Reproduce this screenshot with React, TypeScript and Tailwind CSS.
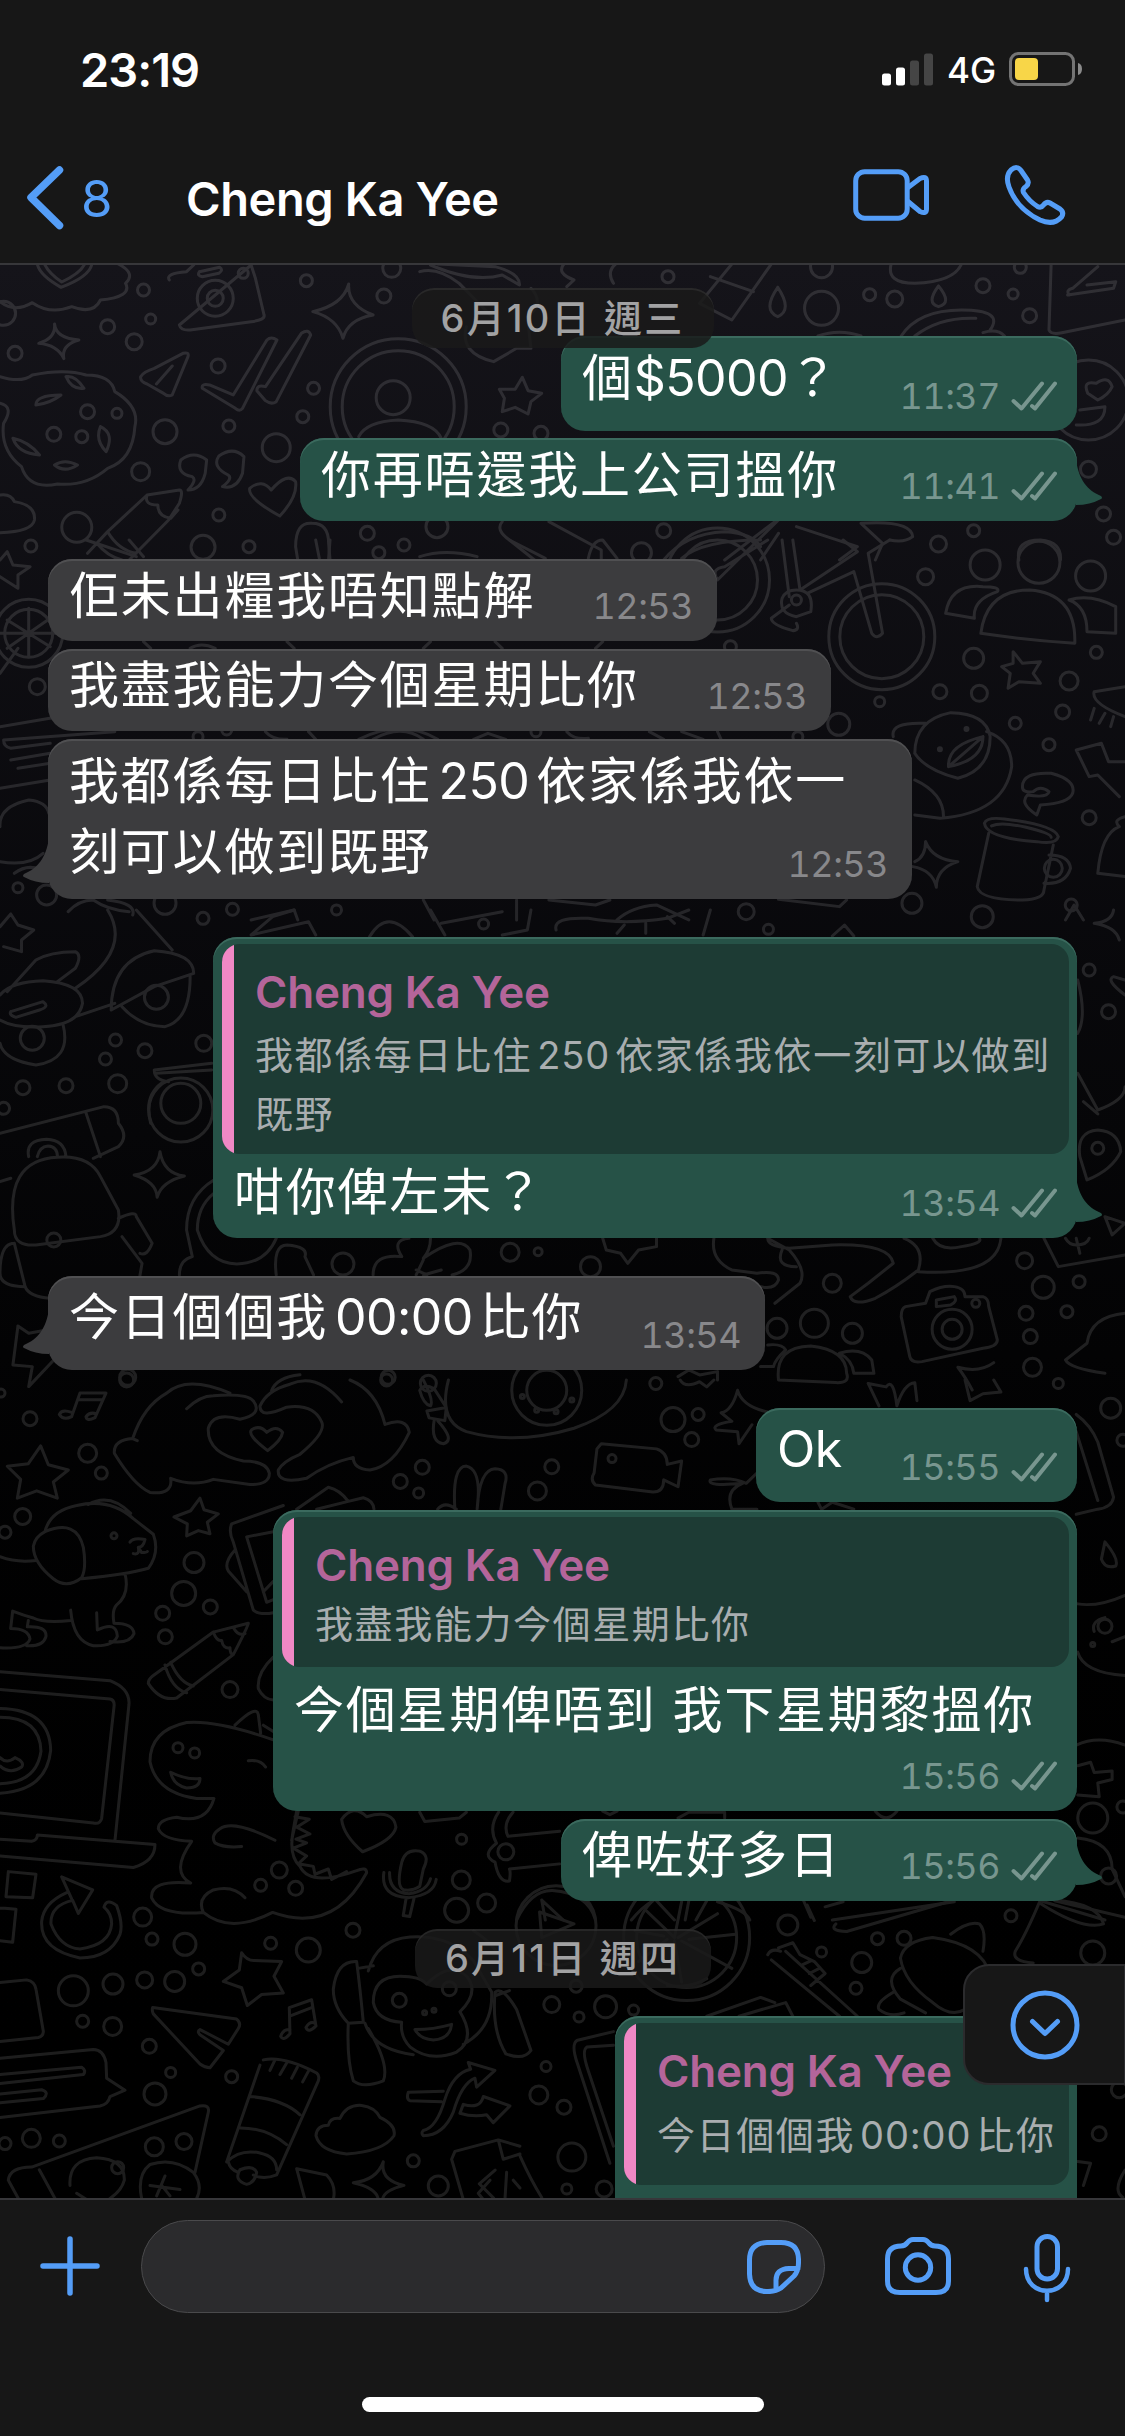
import type { ReactNode } from 'react'

type Quote = { lines: string[]; className: string; textClassName?: string }

type Message = {
  id: number
  mine: boolean
  lines: string[]
  time: string
  tail?: boolean
  quote?: Quote
  /** Size of the bubble and distance to the previous one. */
  className: string
  textClassName?: string
}

const CONTACT = 'Cheng Ka Yee'

const firstDay: Message[] = [
  { id: 1, mine: true, lines: ['個$5000？'], time: '11:37', className: '-mt-3 h-[95px] w-[516px]', textClassName: 'pt-[7px]' },
  { id: 2, mine: true, lines: ['你再唔還我上公司搵你'], time: '11:41', tail: true, className: 'mt-[7px] h-[83px] w-[777px]', textClassName: 'pt-0.5' },
  { id: 3, mine: false, lines: ['佢未出糧我唔知點解'], time: '12:53', className: 'mt-[38px] h-[82px] w-[669px]', textClassName: 'pt-0.5' },
  { id: 4, mine: false, lines: ['我盡我能力今個星期比你'], time: '12:53', className: 'mt-2 h-[82px] w-[783px]', textClassName: 'pt-px' },
  {
    id: 5,
    mine: false,
    lines: ['我都係每日比住250依家係我依一', '刻可以做到既野'],
    time: '12:53',
    tail: true,
    className: 'mt-2 h-[160px] w-[864px]',
    textClassName: 'pt-[7px]',
  },
  {
    id: 6,
    mine: true,
    lines: ['咁你俾左未？'],
    time: '13:54',
    tail: true,
    quote: { lines: ['我都係每日比住250依家係我依一刻可以做到', '既野'], className: 'h-[210px]', textClassName: 'mt-1.5' },
    className: 'mt-[38px] h-[301px] w-[864px]',
    textClassName: 'pt-[3px]',
  },
  {
    id: 7,
    mine: false,
    lines: ['今日個個我00:00比你'],
    time: '13:54',
    tail: true,
    className: 'mt-[38px] h-[94px] w-[717px]',
    textClassName: 'pt-1.5',
  },
  { id: 8, mine: true, lines: ['Ok'], time: '15:55', className: 'mt-[38px] h-[94px] w-[321px]', textClassName: 'pt-1.5' },
  {
    id: 9,
    mine: true,
    lines: ['今個星期俾唔到 我下星期黎搵你'],
    time: '15:56',
    quote: { lines: ['我盡我能力今個星期比你'], className: 'h-[150px]', textClassName: 'mt-0.5' },
    className: 'mt-2 h-[301px] w-[804px]',
    textClassName: 'pt-2',
  },
  { id: 10, mine: true, lines: ['俾咗好多日'], time: '15:56', tail: true, className: 'mt-2 h-[82px] w-[516px]', textClassName: 'pt-px' },
]

const secondDay: Message[] = [
  {
    id: 11,
    mine: true,
    lines: [],
    time: '',
    quote: { lines: ['今日個個我00:00比你'], className: 'h-[162px]', textClassName: 'mt-[7px]' },
    className: 'mt-7 h-[240px] w-[462px]',
  },
]

/** One strip of the wallpaper: its own origin and scale, line drawings and loose rings. */
type Strip = { y: number; sx: number; sy: number; paths: string[]; rings: [number, number, number][] }

const strips: Strip[] = [
  {
    y: 260,
    sx: 0.7175,
    sy: 0.3333,
    paths: [
      'M0 125 Q20 160 45 128 Q70 165 100 140 Q130 165 140 120 Q185 110 175 70 Q190 40 165 12',
      'M52 12 Q55 45 85 82 Q125 50 128 12 M62 12 Q68 40 86 66 Q112 40 118 12',
      'M236 60 Q230 40 260 35 L270 15 M350 15 L356 55 L368 165 Q370 180 350 185 L265 210 Q252 212 250 195 Z M278 35 L306 22 Q312 30 305 40 L282 50 Q274 48 278 35',
      'M486 72 Q484 135 520 165 Q485 178 478 235 Q470 175 436 155 Q478 135 486 72Z',
      'M76 192 Q78 235 110 240 Q85 255 89 296 Q80 255 54 250 Q78 235 76 192Z',
      'M282 385 Q280 370 292 375 L325 405 L372 240 Q378 228 386 240 L338 445 Q334 456 328 445Z M358 392 Q358 372 370 380 L420 220 Q430 205 433 225 L385 425 Q378 435 370 422Z',
      'M196 350 Q200 335 215 325 L255 280 Q264 275 262 290 L240 405 Q234 412 228 400 L205 372 Q195 365 196 350Z M240 318 L218 372',
      'M500 530 Q510 485 555 480 Q605 485 615 535',
      'M728 352 L736 392 L755 400 L740 425 L736 462 L718 442 L700 455 L703 415 L696 388 L718 388Z',
      'M0 350 Q30 370 45 345 Q90 325 120 345 Q155 345 160 395 Q195 440 188 500 Q185 600 150 625 Q120 680 80 672 Q40 690 30 620 Q0 570 5 490 Q20 440 0 430',
      'M50 435 Q50 405 85 405 Q70 430 50 435 M92 350 Q105 345 117 385 Q100 390 92 350 M18 535 Q40 545 55 585 Q25 580 18 535 M76 615 Q90 595 108 615 Q90 640 76 615 M140 500 Q160 520 148 575 Q132 540 140 500',
      'M286 640 Q280 690 262 690 Q275 660 268 650 Q245 640 252 600 Q270 570 288 600Z M338 640 Q330 690 310 680 Q325 655 318 645 Q295 620 305 588 Q325 558 340 590Z',
      'M390 768 Q345 715 348 685 Q365 655 378 690 Q400 635 412 665 Q415 710 390 768Z',
      'M122 880 L150 815 L205 705 L250 690 Q256 690 250 730 L235 780 L180 900 M150 815 Q165 870 190 880 M135 850 Q150 890 170 900 M205 705 Q200 735 220 735 Q220 770 238 775 L248 750',
      'M0 705 Q15 700 20 725 Q50 735 48 780 Q45 815 0 818',
      'M412 860 Q412 785 435 790 Q458 790 458 850 L460 900 M412 860 L415 900',
      'M585 35 Q610 20 640 70 L690 180 M600 15 Q660 70 700 45 L724 75 Q725 40 690 20 L610 12 M740 85 Q760 130 735 170 L740 265 L720 265 L688 305 Q640 280 650 200',
      'M786 12 Q775 40 800 60 L790 80 M858 12 Q845 35 855 70',
      'M1020 12 L975 130 L1020 180 L1075 12 M990 50 L1050 95',
      'M1084 82 Q1105 150 1084 170 Q1062 150 1084 82 M1308 78 Q1328 130 1308 140 Q1290 130 1308 78',
      'M1242 12 Q1235 70 1275 70 Q1330 65 1340 12',
      'M1256 228 Q1280 150 1340 150 Q1400 150 1380 210 M1275 228 Q1310 170 1360 175 M1140 228 Q1170 205 1200 228 M1400 228 Q1390 205 1370 218',
      'M1465 12 L1462 210 Q1465 225 1480 218 L1568 180 M1490 105 Q1485 90 1495 85 L1530 20 M1488 105 L1552 85 L1555 65 L1515 75',
      'M1516 400 Q1508 360 1528 370 Q1545 345 1550 380 Q1545 405 1530 420Z M1505 450 L1540 440 Q1540 500 1500 495',
      'M700 785 Q690 810 710 840 L745 900 M765 785 L838 870 L838 900 M925 900 Q955 820 1010 815 Q1050 820 1060 860 M1080 785 L1010 900 M1085 820 L1060 900 M1110 800 L1195 860 L1170 900 M1200 790 L1230 850 L1220 900 M1200 790 Q1270 780 1272 830 Q1260 850 1240 840',
      'M1420 900 Q1415 840 1450 840 Q1480 845 1478 900',
    ],
    rings: [
      [300, 115, 18], [300, 115, 8], [339, 40, 5], [200, 90, 6], [210, 177, 5], [150, 200, 7], [187, 245, 8], [21, 280, 7], [5, 160, 12],
      [427, 62, 6], [546, 25, 9], [535, 108, 7], [304, 318, 7], [437, 385, 6], [422, 470, 6], [319, 498, 6], [230, 515, 12], [385, 563, 14],
      [196, 635, 9], [555, 440, 68], [555, 440, 56], [548, 413, 17], [698, 510, 7], [754, 520, 7], [305, 765, 6], [107, 802, 15],
      [283, 862, 12], [347, 860, 6], [512, 820, 7], [43, 858, 6], [609, 800, 11], [563, 855, 6], [528, 878, 6], [925, 812, 7],
      [894, 878, 10], [75, 523, 7], [122, 455, 7], [931, 50, 6], [1145, 145, 17], [1145, 20, 11], [1212, 104, 6], [1247, 117, 8],
      [1370, 77, 7], [1412, 102, 5], [1435, 167, 7], [1422, 22, 6], [1517, 420, 40], [1517, 628, 8], [1538, 762, 7], [1308, 852, 8],
      [1357, 812, 6], [1552, 832, 7], [163, 460, 5], [114, 530, 6],
    ],
  },
  {
    y: 540,
    sx: 0.7175,
    sy: 0.3333,
    paths: [
      'M0 60 L10 35 L18 75 L42 80 L25 105 L25 145 L0 110',
      'M40 205 L40 350 M10 240 L70 320 M70 235 L10 325 M0 280 L78 280',
      'M0 400 L25 325 M0 560 L110 520 M5 600 L160 575 M15 625 L70 610 M15 660 L70 640 M25 685 L70 670 M0 745 L70 720 M5 600 Q5 620 15 625',
      'M0 860 Q-2 800 40 780 Q65 785 68 820 M0 965 Q40 980 60 940 M20 1000 Q45 960 70 1010',
      'M120 0 L190 50 M180 0 L200 50 M440 0 L445 55 M460 0 L458 55 M710 0 L760 55 M585 50 Q620 25 665 50 M820 55 Q825 0 840 0 L860 55',
      'M950 55 Q980 0 1060 0 M1000 120 L1085 -60 M1000 120 Q990 85 1010 80 L1070 0 M1090 0 L1100 170 M1105 0 L1115 150 L1195 35 L1175 0 M1125 160 L1190 95 L1215 280 Q1222 300 1230 280 L1210 40 L1240 0 M1090 175 Q1085 220 1110 230 L1130 215 Q1135 150 1110 150 Q1095 150 1090 175 M1100 195 L1075 235 Q1075 255 1105 272 Q1115 270 1110 250',
      'M1318 220 Q1325 130 1370 140 Q1395 140 1390 155 Q1355 180 1358 235Z M1367 280 Q1375 150 1435 150 Q1500 160 1498 310 Q1430 300 1367 280Z M1490 180 Q1520 160 1555 200 L1555 280 L1515 275 Q1515 200 1490 180Z',
      'M1412 335 L1425 370 L1450 365 L1440 400 L1450 430 L1420 425 L1405 445 L1408 400 L1396 380 L1412 370Z',
      'M1568 440 L1525 455 Q1520 490 1568 530 M1525 505 L1520 540 M1540 520 L1532 550 M1552 530 L1548 560',
      'M1245 590 Q1240 545 1290 550 M1275 640 Q1290 690 1335 715 Q1380 690 1380 590 Q1375 520 1325 518 Q1275 540 1275 640 M1375 575 Q1410 600 1410 680 Q1400 820 1310 835 L1275 825 M1275 720 Q1315 760 1315 830 M1322 680 Q1320 615 1370 590 Q1370 660 1322 680 L1370 590',
      'M1500 630 L1535 610 L1545 665 L1568 665 M1500 630 L1518 710 L1530 705 L1560 770',
      'M1425 740 Q1425 695 1465 700 Q1500 720 1495 760 Q1490 790 1450 795 L1445 825 Q1420 790 1432 765 Q1460 775 1462 755 Q1450 735 1440 755 Q1425 760 1425 740Z',
      'M1372 850 Q1375 830 1400 837 Q1470 855 1475 890 Q1472 915 1445 905 Q1375 895 1372 850 M1382 858 Q1395 845 1430 862 Q1465 880 1465 892 M1378 880 L1362 1040 Q1365 1080 1425 1080 Q1455 1078 1455 1050 L1468 915 M1462 945 Q1490 945 1492 985 Q1485 1035 1455 1030',
      'M1290 905 Q1300 960 1335 965 Q1305 985 1305 1042 Q1300 990 1272 980 M1290 905 Q1290 950 1275 965',
      'M1568 830 Q1550 840 1560 860 Q1535 880 1530 1000 L1568 1010',
      'M200 305 L210 325 M265 325 Q280 305 300 325 M400 305 L410 325 M590 325 L600 305 M700 325 L690 305 M830 325 L840 305 M370 575 Q380 600 400 598 M430 575 L440 598 M500 598 Q560 535 610 598 M520 598 Q560 550 590 598 M660 598 L680 580 L705 598 M790 575 Q800 600 820 595 M905 575 L925 598 M950 575 L980 598 M1000 575 L1005 598',
      'M590 1080 L605 1140 M720 1080 L720 1140 M765 1080 L830 1095 L850 1080 M860 1140 Q880 1100 915 1095 L960 1140 M1085 1078 L1170 1100 L1180 1080 M1485 1140 L1497 1095 L1510 1140 M350 1140 L410 1110 L415 1140 M95 1115 Q110 1080 130 1080 Q150 1110 180 1115 M150 1080 Q190 1090 185 1125',
    ],
    rings: [
      [40, 280, 34], [40, 280, 24], [52, 440, 8], [1229, 290, 53], [1229, 290, 42],
      [1000, 120, 52], [1000, 120, 40], [1290, 110, 8], [1373, 75, 15], [1448, 67, 21], [1520, 108, 15], [1528, 337, 6],
      [1357, 355, 10], [1310, 455, 7], [1365, 460, 8], [1490, 423, 9], [1226, 485, 5], [1169, 553, 11], [1481, 516, 7], [1415, 550, 6],
      [1462, 614, 6], [1518, 833, 7], [1468, 985, 9], [25, 1043, 5], [65, 1065, 10], [230, 1090, 11], [324, 1108, 6], [469, 1110, 5],
      [1040, 1115, 8], [1271, 1090, 10], [1369, 1130, 11], [1493, 1095, 6], [1347, 567, 1.5], [1310, 628, 1.5], [1110, 180, 5], [1018, 320, 6],
      [276, 590, 5], [316, 570, 5], [747, 575, 5], [1112, 590, 5],
    ],
  },
  {
    y: 910,
    sx: 0.7175,
    sy: 0.3333,
    paths: [
      'M15 12 L25 45 L47 60 L30 90 L30 125 L5 110 M15 12 L0 50',
      'M0 255 Q15 215 60 212 Q115 220 115 280 Q110 345 60 350 Q20 355 0 330 M15 305 L60 275 Q70 290 55 300 L22 322 Q12 315 15 305 M10 245 L50 150 Q70 125 105 125 Q115 135 105 175 L80 215 M150 0 Q185 120 105 235 M190 0 L240 120 M155 300 Q155 150 215 122 Q270 130 270 190 L215 230 L155 300 M105 320 L160 280 M170 290 Q195 350 230 350 Q265 330 265 200 M88 345 Q100 450 50 465 Q5 450 0 400',
      'M350 75 L380 20 L410 0 M350 75 L430 35 L440 75 M600 0 L620 75 M615 40 L700 5 M740 0 L735 60 L700 75 M775 60 Q770 20 820 25 Q870 45 930 25 L960 0 M860 70 L870 45 M900 70 L900 40 M940 40 L930 20 M990 0 L980 75 M1160 78 L1177 45 L1190 78 M515 80 Q540 -10 575 80',
      'M215 480 L295 460 M215 480 Q215 510 235 515 M218 490 L295 480 M210 640 Q200 560 225 520',
      'M0 670 L145 590 Q165 590 165 640 Q180 680 165 710 L130 745 M120 610 L140 740 M0 815 L15 805 M40 740 Q35 690 65 688 Q90 690 92 740 M52 740 Q55 710 67 708 Q80 710 80 740 M20 960 Q5 750 80 742 Q125 735 140 800 L165 900 Q170 970 140 980 L50 1005 Q20 1010 20 960 M0 1090 Q0 1000 20 1000 M165 925 Q190 900 190 920 L212 1000 Q205 1040 195 1030 M20 1000 L35 1130 Q40 1160 70 1165 M170 980 L198 1060 L195 1097 M0 1090 Q0 1130 35 1130',
      'M223 725 Q228 790 257 798 Q225 815 219 862 Q218 815 187 795 Q220 785 223 725Z',
      'M298 810 Q260 860 260 960 L268 1040 Q250 1050 250 1095 M298 850 Q275 890 275 960 Q290 1060 330 1062 Q370 1060 385 985 M385 1095 Q380 1005 400 1005 Q430 1010 425 1040 L437 1095',
      'M520 1095 Q520 1030 560 1040 Q545 990 570 985 M600 985 Q600 1020 590 1045 Q640 970 655 1020 Q660 1080 630 1095 M580 1095 L590 1050 M590 1095 L615 1080 M580 1080 L595 1095 M840 985 L845 1020 L865 1030 L875 1060 L890 1020 L915 1010 L915 985',
      'M995 985 Q990 1050 1020 1080 L1055 1090 M1070 985 L1100 1020 Q1125 1080 1115 1120 L1080 1180 M1070 985 Q1070 1010 1100 1015 L1160 1005 Q1240 1000 1245 1060 L1210 1120 L1185 1160 Q1190 1190 1220 1165 Q1250 1130 1280 1080 Q1290 1010 1260 985 M1280 1085 Q1390 1100 1395 985 M1055 1090 Q1085 1080 1085 1110 Q1080 1140 1060 1130 M1090 1020 Q1080 1070 1110 1070',
      'M1300 985 Q1310 1025 1340 1010 Q1370 1000 1365 985 M1455 985 L1475 1070 L1568 1035 M1505 1030 L1500 985 M1485 985 Q1490 1005 1500 1005 Q1515 1005 1518 985',
      'M1502 210 Q1515 320 1502 370 M1502 490 L1530 600 Q1568 570 1568 530 M1510 575 L1530 612 M1568 255 Q1540 210 1552 200 L1568 210',
      'M1515 810 L1505 740 Q1500 665 1530 660 Q1560 665 1562 725 Q1550 780 1515 810Z M1540 920 L1568 940 L1550 975Z',
      'M1262 1190 L1290 1180 L1296 1145 Q1315 1125 1330 1130 Q1345 1135 1345 1160 L1370 1160 Q1378 1165 1378 1190 L1390 1290 Q1390 1310 1370 1315 L1285 1355 Q1270 1360 1268 1340 L1256 1220 Q1256 1195 1262 1190Z M1305 1170 L1330 1160 Q1335 1175 1325 1185 L1305 1190Z',
      'M1568 1210 Q1520 1220 1515 1300 L1485 1350 Q1490 1375 1540 1390',
      'M1085 1410 Q1080 1310 1130 1308 Q1180 1320 1180 1390 Q1185 1420 1165 1418Z M1070 1305 Q1090 1300 1095 1320 Q1080 1350 1078 1370 L1060 1370 M1170 1330 Q1200 1310 1215 1350 L1218 1390 L1190 1390 Q1188 1350 1170 1330',
      'M25 1248 L40 1270 L65 1260 M25 1248 L18 1365 L45 1370 L40 1430 L75 1350',
      'M945 1400 L960 1380 L975 1395 L1000 1385 L1000 1410 M1385 1358 Q1365 1390 1335 1372 Q1345 1400 1355 1440',
      'M1552 0 Q1550 35 1525 40 Q1555 50 1560 90',
    ],
    rings: [
      [283, 25, 6], [218, 262, 12], [45, 385, 12], [161, 390, 6], [202, 422, 7], [147, 447, 6], [284, 400, 8], [32, 533, 7], [92, 527, 7],
      [164, 521, 9], [5, 595, 6], [252, 600, 32], [252, 580, 20], [75, 990, 7], [478, 1062, 11], [711, 1027, 9], [750, 1025, 4], [823, 1070, 10],
      [674, 42, 5], [1071, 58, 5], [1518, 180, 6], [1545, 305, 7], [1530, 715, 6], [1428, 1052, 8],
      [1504, 1115, 6], [1454, 1132, 11], [1430, 1210, 7], [1487, 1205, 6], [1436, 1280, 7], [1439, 1372, 9], [1160, 1120, 9], [1135, 1240, 14],
      [1083, 1255, 10], [1188, 1270, 10], [1327, 1258, 20], [1327, 1258, 10], [1360, 1180, 4], [178, 1402, 8], [541, 1402, 7], [597, 1420, 8],
    ],
  },
  {
    y: 1380,
    sx: 0.7175,
    sy: 0.3444,
    paths: [
      'M625 0 Q610 120 650 150 Q720 190 800 140 Q870 90 873 0 M590 0 Q605 60 600 75 Q590 70 585 30 Q590 10 605 25 L622 80 M595 90 L622 80 L620 118 L598 110Z M605 118 Q600 180 618 185 Q635 175 610 118',
      'M634 375 Q630 250 650 250 Q672 260 665 375 Q668 260 690 258 Q710 260 704 300 L698 375 M610 375 Q620 350 636 375',
      'M838 185 L915 200 Q930 210 930 245 L950 235 L945 310 L925 290 Q925 325 910 325 L830 305 Q822 290 828 270 L832 200Z',
      'M948 0 Q955 25 975 5 L985 20 L995 0 M1028 30 Q1035 80 1075 95 M1028 30 Q1020 90 1005 95 L1020 120 Q990 130 998 145 L1028 150 L1030 185 L1048 130',
      'M1225 75 L1210 10 L1235 20 Q1245 -10 1250 75 M1250 75 Q1260 10 1275 8 L1278 60 M1345 0 L1352 60 L1370 40 L1395 35 L1385 0',
      'M1055 375 L1020 375 Q1010 320 1035 300 Q985 310 990 290 Q1020 280 1040 300 L1055 270 M1140 355 L1145 375 L1160 355 L1190 375',
      'M1500 100 Q1520 130 1530 180 L1552 340 Q1550 370 1530 375 L1500 390 M1500 150 L1530 350 M1540 470 Q1560 520 1555 540 Q1540 550 1535 520Z',
      'M1502 650 Q1530 660 1568 625 M1502 790 Q1510 850 1568 858 M1540 690 Q1520 700 1525 730 M1550 760 L1568 745',
      'M1500 1060 Q1530 1030 1568 1060 M1502 1120 L1520 1110 L1525 1140 L1550 1135 L1550 1160 L1530 1170 L1532 1210 L1502 1205',
      'M585 1255 L592 1282 L640 1272 L650 1255 M695 1255 Q680 1300 692 1345 Q670 1380 690 1400 Q695 1460 710 1455 Q712 1430 710 1420 L780 1405 M715 1255 Q700 1290 708 1325 L780 1310 M945 1272 L960 1255 L1010 1255 L1010 1272 M1220 1252 Q1235 1290 1250 1252 M840 1252 L850 1262 L860 1252',
      'M560 1400 Q565 1360 585 1368 Q600 1380 590 1420 L585 1470 Q575 1485 562 1480 Q552 1470 560 1400Z M535 1430 Q530 1500 570 1503 Q605 1495 608 1450 M543 1430 Q542 1488 570 1492 Q595 1485 600 1448 M566 1505 L562 1555 L571 1558 L577 1505',
      'M720 1568 Q740 1480 770 1482 Q820 1490 830 1568 M755 1510 L760 1568 M755 1510 L785 1568 M880 1568 Q895 1530 910 1512 M1000 1515 Q1040 1540 1045 1568 M915 1512 L940 1568 M960 1512 L955 1568 M985 1512 L970 1568 M1120 1512 L1130 1560 M1160 1568 L1330 1515 M1450 1512 L1540 1568 M1470 1512 L1568 1560 M1502 1330 Q1550 1340 1550 1420 L1568 1500',
    ],
    rings: [
      [762, 30, 35], [762, 30, 20], [748, 88, 2], [775, 92, 2], [728, 48, 2], [797, 58, 2], [853, 228, 4], [914, 10, 6], [938, 115, 12],
      [973, 100, 6], [964, 173, 7], [769, 252, 7], [749, 322, 9], [1548, 82, 10], [1565, 175, 6],
      [1475, 10, 5], [1540, 715, 7], [1523, 768, 2], [1523, 1272, 15], [1565, 1240, 6], [705, 1370, 8], [1545, 1440, 8],
    ],
  },
  {
    y: 1900,
    sx: 0.7175,
    sy: 0.3419,
    paths: [
      'M690 270 Q700 250 720 320 L740 440 Q730 470 705 450 Q685 380 690 270 M710 265 L690 280 M752 35 L755 110 L800 70Z M660 90 Q690 130 700 180',
      'M900 30 L940 110 L950 5 M945 110 L1000 40 M960 115 L1025 100 M950 120 L1020 200 M940 120 L950 240 M930 115 L890 180 M925 105 L885 90 M930 250 Q960 260 985 230',
      'M1075 175 L1170 340 M1095 150 L1195 340 M1070 160 Q1075 140 1088 150 M1085 140 L1105 125 L1115 160 L1135 180 L1150 215 L1130 250 M1118 190 L1130 178 M1128 215 L1142 200',
      'M985 340 L1060 285 L1080 300 M1030 340 L1095 300 L1105 340',
      'M1300 110 Q1260 120 1255 170 Q1260 240 1300 300 Q1325 345 1345 320 M1300 110 Q1370 130 1380 220 M1325 100 Q1350 60 1365 70 Q1375 90 1370 150 M1255 200 Q1230 230 1255 290 L1290 330 M1245 270 Q1220 300 1225 320 Q1240 345 1260 330',
      'M1450 0 Q1430 100 1415 150 Q1410 180 1440 184 M1470 0 Q1530 10 1538 70 Q1510 90 1450 10 M1125 15 L1135 60 M1165 70 Q1155 90 1180 92 L1330 0 M1150 20 L1175 5',
      'M855 385 L805 410 Q795 420 805 480 L850 770 M855 425 L818 430 Q810 440 820 500 L855 720 M1502 765 L1520 770 L1510 835 M1568 790 Q1550 850 1565 870',
      'M725 750 Q740 820 755 870 M690 790 L668 830 L688 872',
    ],
    rings: [
      [775, 75, 40], [957, 110, 63], [957, 110, 50], [1098, 73, 10], [1145, 152, 5], [1201, 183, 10], [1193, 258, 6], [1223, 113, 6],
      [1260, 112, 7], [1409, 46, 6], [1523, 155, 12], [769, 306, 8], [844, 312, 11], [883, 322, 5], [807, 342, 5], [803, 252, 6],
      [761, 487, 5], [751, 570, 9], [786, 606, 7], [797, 752, 14], [790, 845, 5], [842, 845, 8], [1532, 684, 7], [1560, 555, 8],
    ],
  },
  {
    y: 1380,
    sx: 0.3333,
    sy: 0.523,
    paths: [
      'M398 112 Q430 50 500 25 Q560 -10 690 25 M398 112 Q340 115 343 140 Q400 200 450 215 Q520 220 512 188 Q580 205 640 190 L750 200 Q810 200 808 178 Q800 155 730 155 Q620 140 625 92 Q640 60 720 75 Q790 65 760 40 Q740 25 640 30 Q600 30 560 55 M398 112 L412 116',
      'M815 20 Q830 -5 900 -10 M1050 0 Q1130 20 1155 85 Q1220 70 1228 100 Q1180 165 1110 172 Q1060 170 1060 148 Q980 160 920 188 Q830 200 835 172 Q850 155 900 142 Q980 100 965 80 Q940 45 860 52 Q780 75 780 50 Q800 20 870 8 Q950 -15 1025 42',
      'M803 135 Q740 105 755 95 Q780 85 800 100 Q830 85 848 100 Q845 115 803 135Z',
      'M215 70 L240 25 L318 25 L285 72 M235 38 L305 38 M215 70 Q190 78 178 66 Q185 55 215 62 M285 72 Q260 80 258 70 Q270 60 290 65',
      'M122 126 L145 162 L205 172 L160 195 L172 226 L110 212 L52 226 L62 190 L22 165 L85 160Z',
      'M600 226 L612 248 L655 256 L622 272 L630 294 L595 288 L560 298 L562 275 L522 262 L572 250Z',
      'M0 338 Q50 350 108 345 M135 290 Q150 250 230 240 Q330 225 400 265 L460 295 Q480 330 445 360 Q380 372 245 380 M135 290 Q230 265 250 320 Q260 360 245 378 Q200 400 160 380 Q100 350 100 318 Q105 300 135 290 M265 238 Q330 215 392 255 M375 370 Q390 410 350 430 Q335 440 342 465 Q400 465 402 485 Q390 505 330 500 M290 445 L292 478 Q350 460 352 490 Q340 510 280 508 Q220 500 212 440 M212 460 Q130 465 100 455 Q70 450 38 442 L32 475 Q85 475 90 495 Q80 515 0 512 M85 460 L82 472 Q140 470 138 490 Q130 510 80 508 M390 310 Q400 300 435 305 Q430 320 415 320 L425 330 Q440 330 442 328 M415 320 Q420 335 400 332',
      'M745 465 Q745 470 700 525 L530 608 Q480 615 445 580 Q445 572 460 565 L640 482Z M495 545 Q515 590 560 598 M512 540 Q540 580 580 585 M640 482 Q650 500 665 498 Q670 515 690 512 Q690 525 700 525 M702 475 Q715 490 735 485',
      'M0 558 L330 575 Q390 590 387 620 L345 880 M0 592 L330 610 Q345 612 342 625 L305 838 Q300 850 280 847 L0 828 M0 878 L95 882 Q112 880 112 870 L465 888 Q465 920 400 932 L0 910 M0 628 Q150 630 152 708 Q140 785 0 790 M0 645 Q120 645 123 710 Q110 770 0 772 M0 722 Q20 735 45 722 Q75 730 65 740 Q30 755 0 738',
      'M875 880 L895 824 M705 660 Q770 620 775 640 L782 675 M820 688 Q650 650 560 655 Q450 670 450 730 Q470 790 590 800 L642 800 Q620 850 530 836 Q475 840 475 858 Q490 880 575 882 Q510 940 572 962 Q450 955 455 990 Q480 1025 610 1018 Q590 990 640 975 Q700 965 735 990 M610 1018 Q690 1060 818 1018 Q1000 1060 1100 942 Q1100 930 1070 938 Q930 970 900 930 Q865 910 880 860 L890 824 M512 750 Q560 765 600 762 Q600 780 560 780 Q520 775 512 750Z M825 880 Q700 840 660 858 Q630 870 645 885 Q670 895 725 892 M745 728 Q780 725 797 740 M790 660 L820 672 M885 835 L928 840 L890 855 L930 868 L888 878 L920 885 L880 895 L920 910 L895 925 L940 930 L945 945 L985 935 L995 955 L1040 940 M820 530 Q770 560 775 590 Q790 610 820 612',
      'M850 240 L695 275 Q685 290 700 310 L760 440 Q780 450 820 445 M820 290 L740 300 L800 425 L820 420 M705 325 Q670 350 685 365 L740 405 M790 405 L820 385 M890 247 L985 205 Q1020 210 1045 232 L950 247 M1045 232 L1090 225 Q1120 230 1122 247',
      'M1088 902 Q1030 870 1025 840 Q1060 810 1100 835 Q1180 820 1188 855 Q1180 880 1088 902Z',
      'M25 940 L108 945 L98 990 L18 988Z M0 1010 L15 1010 L48 1012 L38 1075 L0 1072',
      'M215 992 L185 950 L278 975 L235 1020 L218 995 Q150 1005 153 1040 Q180 1085 240 1088 Q330 1080 335 1040 Q335 1020 312 1008 Q320 990 350 1005 Q370 1040 360 1060 Q330 1105 240 1105 Q120 1090 125 1035 Q130 1000 200 980',
      'M725 1095 Q740 1110 762 1110 L845 1112 L822 1140 L850 1172 L785 1175 L742 1196 L725 1162 L670 1150 L718 1128Z',
      'M458 1200 L710 1222 Q725 1230 715 1240 L685 1270 L600 1242 Q590 1245 600 1252 L670 1282 L630 1315 Q615 1315 600 1308 L460 1212 Q455 1205 458 1200Z',
      'M870 1250 L868 1200 L935 1185 L948 1235 M875 1215 L935 1200 M870 1250 Q850 1265 842 1255 Q850 1240 870 1242 M948 1235 Q925 1250 918 1238 Q930 1225 945 1230',
      'M1105 1130 Q1130 1070 1230 1065 Q1350 1060 1420 1110 L1475 1170 Q1480 1240 1390 1270 M1095 1230 Q1120 1280 1240 1290 M1205 1228 Q1130 1225 1120 1190 Q1120 1140 1200 1140 Q1260 1140 1280 1155 Q1350 1110 1400 1140 Q1440 1170 1380 1208 Q1430 1260 1370 1285 Q1290 1305 1230 1275 Q1200 1255 1205 1228 M1245 1242 Q1300 1242 1355 1232 Q1350 1260 1300 1262 Q1260 1260 1245 1242 M1045 1230 Q1000 1200 1000 1165 Q1010 1110 1070 1112 Q1080 1160 1090 1228Z M1045 1230 Q1040 1300 1060 1340 Q1090 1355 1150 1340 Q1170 1310 1105 1240 M1075 1125 L1120 1120',
      'M0 1152 L80 1147 Q105 1150 108 1165 L130 1245 Q130 1255 115 1257 L0 1265',
      'M0 1297 L280 1280 Q310 1280 318 1305 L320 1335 L375 1358 L330 1370 Q325 1385 300 1388 L0 1410 M0 1328 L245 1314 Q260 1320 250 1328 L0 1345 M0 1365 L125 1357 Q150 1362 130 1374 L0 1382',
      'M25 1530 Q30 1505 95 1505 L600 1388 Q630 1385 625 1400 L585 1515 M118 1510 L165 1565 M25 1530 L55 1565 M210 1540 Q205 1490 290 1487 Q375 1490 373 1530 Q365 1550 330 1565 M230 1555 L260 1567 M425 1565 Q410 1520 450 1500 Q520 1485 580 1515 Q610 1540 590 1565 M450 1540 L540 1548 M495 1522 L470 1560 M485 1540 L510 1560',
      'M790 1300 Q850 1292 950 1325 Q960 1330 955 1340 L830 1520 Q790 1530 760 1520 M680 1495 L780 1310 M680 1495 Q720 1470 780 1478 Q830 1485 830 1510 M685 1495 Q690 1510 715 1515 M750 1370 Q850 1375 900 1405 M722 1430 Q800 1430 860 1462 M825 1300 L810 1320 M860 1306 L840 1328 M892 1314 L875 1335 M925 1322 L908 1342 M720 1510 Q760 1500 770 1515 Q765 1535 740 1538 Q700 1530 720 1510',
      'M985 1425 Q990 1410 1020 1412 Q1040 1385 1085 1387 Q1125 1390 1140 1410 Q1190 1425 1182 1445 Q1150 1475 1040 1480 Q960 1475 948 1445 Q950 1425 985 1425Z',
      'M1270 1435 Q1310 1430 1335 1375 Q1360 1325 1412 1318 L1405 1305 L1485 1320 L1430 1352 L1425 1335 Q1385 1345 1360 1400 Q1330 1445 1270 1445 Q1262 1440 1270 1435 M1330 1360 L1225 1362 Q1218 1375 1230 1378 L1325 1380 M1390 1385 Q1440 1395 1450 1370 L1530 1388 L1480 1420 L1460 1405 Q1420 1410 1380 1402Z',
      'M890 1508 L980 1520 Q1010 1540 1000 1567 M890 1508 L915 1567 M1150 1495 Q1140 1530 1212 1540 Q1150 1550 1148 1567 M1150 1495 Q1130 1530 1060 1535 Q1130 1545 1135 1567',
      'M1390 1567 L1355 1490 L1365 1475 L1495 1453 L1560 1465 M1495 1453 L1510 1490 L1560 1480 M1470 1530 L1435 1555 L1450 1567 M1520 1515 L1515 1567 M1540 1530 L1560 1545',
    ],
    rings: [
      [90, 74, 7], [263, 140, 9], [304, 178, 6], [68, 261, 8], [15, 291, 6], [342, 298, 3], [582, 349, 10], [551, 408, 12], [631, 434, 7],
      [488, 446, 7], [496, 491, 7], [690, 592, 8], [534, 703, 5], [584, 713, 5], [838, 937, 8], [782, 966, 6], [887, 972, 7],
      [428, 1027, 9], [456, 1069, 6], [555, 1079, 11], [812, 1077, 6], [925, 1090, 12], [1059, 1052, 7], [596, 1126, 6], [220, 1168, 15],
      [339, 1155, 10], [434, 1147, 8], [524, 1150, 10], [248, 1226, 6], [338, 1236, 9], [448, 1274, 7], [512, 1324, 5], [465, 1365, 11],
      [695, 1332, 6], [15, 1460, 6], [94, 1450, 9], [178, 1455, 6], [463, 1466, 9], [552, 1456, 8], [353, 1506, 6], [1198, 1186, 7],
      [1348, 1164, 7], [1274, 1210, 2], [1302, 1205, 2], [1240, 1493, 6], [1315, 1541, 10], [1385, 878, 5], [1384, 956, 9], [1370, 1014, 12],
      [1460, 1000, 9], [1201, 194, 7], [1267, 167, 7], [1256, 216, 5], [380, 0, 7], [1160, 0, 6], [3, 25, 4],
    ],
  },
]

function Wallpaper() {
  return (
    <svg
      viewBox="0 265 1125 1933"
      className="absolute inset-0 h-full w-full opacity-[0.115]"
      fill="none"
      stroke="#fff"
      strokeWidth="3"
      strokeLinecap="round"
      strokeLinejoin="round"
      aria-hidden="true"
    >
      {strips.map((s, i) => (
        <g key={i}>
          <g transform={`translate(0 ${s.y}) scale(${s.sx} ${s.sy})`}>
            <path d={s.paths.join(' ')} vectorEffect="non-scaling-stroke" />
          </g>
          {s.rings.map(([x, y, r], j) => (
            <circle key={j} cx={x * s.sx} cy={s.y + y * s.sy} r={r} />
          ))}
        </g>
      ))}
    </svg>
  )
}

function Icon({ viewBox, className, children }: { viewBox: string; className: string; children: ReactNode }) {
  return (
    <svg
      viewBox={viewBox}
      className={`flex-none ${className}`}
      fill="none"
      stroke="#549df7"
      strokeWidth="5"
      strokeLinecap="round"
      strokeLinejoin="round"
    >
      {children}
    </svg>
  )
}

function StatusBar() {
  return (
    <div className="flex h-[138px] items-center justify-between pl-20 pr-[42px]">
      <div className="text-[47px] font-semibold leading-none tracking-[-1px] text-white">23:19</div>
      <div className="flex items-center">
        <svg viewBox="0 0 51 33" className="h-[33px] w-[51px]">
          <rect x="0" y="20.5" width="9" height="12" rx="2.5" fill="#fff" />
          <rect x="14" y="14.5" width="9" height="18" rx="2.5" fill="#fff" />
          <rect x="28" y="7.5" width="9" height="25" rx="2.5" fill="#454545" />
          <rect x="42" y="0.5" width="9" height="32" rx="2.5" fill="#454545" />
        </svg>
        <span className="ml-[14px] mt-0.5 w-[62px] text-[35px] font-medium leading-none text-white">4G</span>
        <svg viewBox="0 0 74 34" className="h-[34px] w-[74px]">
          <rect x="1.5" y="1.5" width="63" height="31" rx="8" fill="none" stroke="#747474" strokeWidth="3" />
          <rect x="6" y="6" width="23" height="22" rx="4" fill="#f8d648" />
          <path d="M69 11 Q73 12 73 17 Q73 22 69 23Z" fill="#8a8a8a" />
        </svg>
      </div>
    </div>
  )
}

function Header() {
  return (
    <header className="h-[265px] flex-none border-b-2 border-[#37373a] bg-[#171717]">
      <StatusBar />
      <div className="flex h-[120px] items-center pl-[26px] pr-[59px]">
        <Icon viewBox="0 0 40 64" className="h-16 w-10">
          <path d="M33.5 4 L5 31.5 L33.5 59.5" strokeWidth="7.5" />
        </Icon>
        <span className="ml-[15px] w-[105px] text-[51px] leading-none text-[#549df7]">8</span>
        <h1 className="flex-1 text-[47px] font-semibold leading-none tracking-[-0.4px] text-white">{CONTACT}</h1>
        <Icon viewBox="853 169 77 52" className="mb-1.5 h-[52px] w-[77px]">
          <rect x="855.7" y="171.7" width="51.5" height="46.5" rx="9" />
          <path d="M908 187.5 L920 178.5 Q926.5 175.5 926.5 181 V209 Q926.5 214.5 920 211.5 L908 201.5" />
        </Icon>
        <Icon viewBox="1004 164 62 62" className="mb-1.5 ml-[74px] h-[62px] w-[62px]">
          <path d="M1011 170 Q1017 165 1021 170.5 L1027.5 180 Q1029.5 183.5 1026 186.5 Q1022 189 1023.5 192.5 Q1029 201 1037.5 206.5 Q1041 208.5 1043.5 205 Q1046.5 201 1050 203 L1060 209 Q1064.5 212.5 1061.5 217 Q1053.5 226 1040 220 Q1017 209 1009 187 Q1005 176 1011 170Z" />
        </Icon>
      </div>
    </header>
  )
}

function DayPill({ children, className }: { children: ReactNode; className: string }) {
  return (
    <div
      className={`relative z-10 flex items-center justify-center self-center rounded-[22px] bg-[#1a1a1a]/85 text-[38px] font-medium tracking-[2.2px] text-[#a2a2a3] shadow-[inset_0_2px_0_rgb(255_255_255/7%)] ${className}`}
    >
      {children}
    </div>
  )
}

/** Sets Latin runs tighter than Han text and puts a thin gap round the numbers. */
function MixedLine({ text, small }: { text: string; small?: boolean }) {
  return (
    <div>
      {text.split(/([\x21-\x7e]+)/).map((part, i) => {
        if (i % 2 === 0) return part
        const gap = /^\d/.test(part)
        if (small) return <span key={i} className={gap ? 'mx-[5px] tracking-[0.9px]' : 'tracking-[0.9px]'}>{part}</span>
        return <span key={i} className={gap ? 'mx-[7px] tracking-[-0.6px]' : 'tracking-[-0.6px]'}>{part}</span>
      })}
    </div>
  )
}

function Ticks() {
  return (
    <svg
      viewBox="0 0 46 30"
      className="ml-[11px] h-[30px] w-[46px]"
      fill="none"
      stroke="#78968f"
      strokeWidth="4"
      strokeLinecap="round"
      strokeLinejoin="round"
    >
      <path d="M2.5 20 L10.5 27.5 L31 2.5 M21 25 L24 27.5 L44 2.5" />
    </svg>
  )
}

function Tail({ mine }: { mine: boolean }) {
  return (
    <svg
      viewBox="0 0 27 46"
      className={`absolute bottom-[15px] h-[46px] w-[27px] ${
        mine ? '-right-[26px] fill-[#265247]' : '-left-[26px] -scale-x-100 fill-[#3c3c3e]'
      }`}
    >
      <path d="M0 0 C3 20 11 30 25 36 Q27 38 25 39 Q14 45 0 45Z" />
    </svg>
  )
}

function QuoteBox({ quote }: { quote: Quote }) {
  return (
    <div className={`mx-[9px] mr-2 mt-[7px] flex flex-none overflow-hidden rounded-[18px] bg-[#1d3b34] ${quote.className}`}>
      <div className="w-3 flex-none bg-[#f088c5]" />
      <div className="pl-[21px] pt-5">
        <div className="text-[44px] font-semibold leading-[56px] tracking-[-0.2px] text-[#b4659a]">{CONTACT}</div>
        <div className={`whitespace-nowrap text-[38px] leading-[59px] tracking-[1.6px] text-[#a9aeb0] ${quote.textClassName ?? ''}`}>
          {quote.lines.map((line) => (
            <MixedLine key={line} text={line} small />
          ))}
        </div>
      </div>
    </div>
  )
}

function Bubble({ message }: { message: Message }) {
  const { mine, lines, time, tail, quote, className, textClassName } = message
  return (
    <div
      className={`relative flex flex-none flex-col rounded-[24px] ${
        mine ? 'self-end bg-[#265247] shadow-[inset_0_2px_0_#3b6a5e]' : 'self-start bg-[#3c3c3e] shadow-[inset_0_2px_0_#505052]'
      } ${className}`}
    >
      {quote && <QuoteBox quote={quote} />}
      <div className={`whitespace-nowrap pl-[21px] text-[50px] leading-[71px] tracking-[1.8px] text-white ${textClassName ?? ''}`}>
        {lines.map((line) => (
          <MixedLine key={line} text={line} />
        ))}
      </div>
      {time && (
        <div
          className={`absolute bottom-[19px] flex items-center text-[36px] tabular-nums leading-8 tracking-[-0.5px] ${
            mine ? 'right-[20px] text-[#78968f]' : 'right-[24px] text-[#88888b]'
          }`}
        >
          {time}
          {mine && <Ticks />}
        </div>
      )}
      {tail && <Tail mine={mine} />}
    </div>
  )
}

function Composer() {
  return (
    <footer className="relative flex h-[238px] flex-none items-start border-t-2 border-[#37373a] bg-[#171717] pl-[40px] pr-[53px] pt-5">
      <Icon viewBox="0 0 60 60" className="mt-4 h-[60px] w-[60px]">
        <path d="M30 3 V57 M3 30 H57" strokeWidth="5.5" />
      </Icon>
      <div className="ml-[41px] flex h-[93px] w-[684px] items-center justify-end rounded-full border border-[#4a4a4c] bg-[#2b2b2d] pr-[23px]">
        <Icon viewBox="747 2240 54 54" className="h-[54px] w-[54px]">
          <path d="M798.5 2263 V2259 Q798 2242.5 781 2242.5 H767 Q749.5 2243 749.5 2260 V2274 Q750 2291 766 2291.5 Q775 2292 781 2288 L794 2276 Q798.5 2271 798.5 2263Z M798 2268.5 H789 Q775.5 2269 776 2281 V2290" />
        </Icon>
      </div>
      <Icon viewBox="885 2237 66 58" className="ml-[60px] mt-[17px] h-[58px] w-[66px]">
        <path d="M913 2239.5 H923 Q926 2239.5 928.5 2242.5 Q931 2246 935 2246 Q948.5 2246 948.5 2259 V2281 Q948.5 2292.5 936 2292.5 H900 Q887.5 2292.5 887.5 2281 V2259 Q887.5 2246 901 2246 Q905 2246 907.5 2242.5 Q910 2239.5 913 2239.5Z" />
        <circle cx="918" cy="2267.5" r="12.7" />
      </Icon>
      <Icon viewBox="1023 2233 48 70" className="ml-[72px] mt-[13px] h-[70px] w-[48px]">
        <rect x="1037" y="2236.5" width="20.5" height="42.5" rx="10.25" />
        <path d="M1026 2269 C1026 2298 1068 2298 1068 2269 M1047 2291 V2300" strokeWidth="4.5" />
      </Icon>
      <div className="absolute bottom-[24px] left-[362px] h-[15px] w-[402px] rounded-full bg-white" />
    </footer>
  )
}

export default function App() {
  return (
    <div
      lang="zh-HK"
      className="flex h-[2436px] w-[1125px] flex-col overflow-hidden bg-black font-['Inter','Noto_Sans_CJK_TC',sans-serif]"
    >
      <Header />
      <main className="relative min-h-0 flex-1 overflow-hidden bg-linear-to-b from-[#15141a] via-[#060608] via-45% to-black">
        <Wallpaper />
        <div className="relative flex flex-col pl-12 pr-12 pt-[23px]">
          <DayPill className="h-[60px] w-[302px]">6月10日 週三</DayPill>
          {firstDay.map((m) => (
            <Bubble key={m.id} message={m} />
          ))}
          <DayPill className="mt-7 h-[59px] w-[296px]">6月11日 週四</DayPill>
          {secondDay.map((m) => (
            <Bubble key={m.id} message={m} />
          ))}
        </div>
        <button
          type="button"
          aria-label="Scroll down"
          className="absolute -right-px bottom-[113px] z-20 flex h-[121px] w-[163px] items-center rounded-l-[26px] border-2 border-[#2b2b2d] bg-[#171717] pl-[45px]"
        >
          <Icon viewBox="0 0 70 70" className="h-[70px] w-[70px]">
            <circle cx="35" cy="35" r="32" />
            <path d="M22.5 31.5 L35 43.5 L47.5 31.5" />
          </Icon>
        </button>
      </main>
      <Composer />
    </div>
  )
}
